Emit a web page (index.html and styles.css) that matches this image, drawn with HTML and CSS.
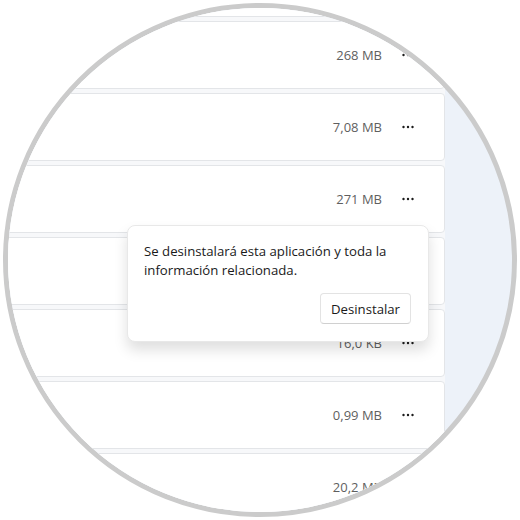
FILE: index.html
```html
<!DOCTYPE html>
<html lang="es">
<head>
  <meta charset="UTF-8" />
  <meta name="viewport" content="width=device-width, initial-scale=1.0"/>
  <title>Aplicaciones instaladas</title>
  <link rel="stylesheet" href="styles.css">
</head>
<body>
  <div class="lens">
    <div class="app-list">
      <div class="app-row"></div>
      <div class="app-row"><span class="size">268 MB</span><span class="more"><svg width="12" height="4" viewBox="0 0 12 4"><circle cx="1.5" cy="2" r="1.2"/><circle cx="6" cy="2" r="1.2"/><circle cx="10.5" cy="2" r="1.2"/></svg></span></div>
      <div class="app-row"><span class="size">7,08 MB</span><span class="more"><svg width="12" height="4" viewBox="0 0 12 4"><circle cx="1.5" cy="2" r="1.2"/><circle cx="6" cy="2" r="1.2"/><circle cx="10.5" cy="2" r="1.2"/></svg></span></div>
      <div class="app-row"><span class="size">271 MB</span><span class="more"><svg width="12" height="4" viewBox="0 0 12 4"><circle cx="1.5" cy="2" r="1.2"/><circle cx="6" cy="2" r="1.2"/><circle cx="10.5" cy="2" r="1.2"/></svg></span></div>
      <div class="app-row"></div>
      <div class="app-row"><span class="size">16,0 KB</span><span class="more"><svg width="12" height="4" viewBox="0 0 12 4"><circle cx="1.5" cy="2" r="1.2"/><circle cx="6" cy="2" r="1.2"/><circle cx="10.5" cy="2" r="1.2"/></svg></span></div>
      <div class="app-row"><span class="size">0,99 MB</span><span class="more"><svg width="12" height="4" viewBox="0 0 12 4"><circle cx="1.5" cy="2" r="1.2"/><circle cx="6" cy="2" r="1.2"/><circle cx="10.5" cy="2" r="1.2"/></svg></span></div>
      <div class="app-row"><span class="size">20,2 MB</span><span class="more"><svg width="12" height="4" viewBox="0 0 12 4"><circle cx="1.5" cy="2" r="1.2"/><circle cx="6" cy="2" r="1.2"/><circle cx="10.5" cy="2" r="1.2"/></svg></span></div>
    </div>

    <div class="flyout">
      <p>Se desinstalará esta aplicación y toda la información relacionada.</p>
      <div class="flyout-actions">
        <button>Desinstalar</button>
      </div>
    </div>
  </div>
</body>
</html>
```

FILE: styles.css
```css
body {
  margin: 0;
  background: #fff;
  font-family: 'Open Sans', 'Noto Sans', sans-serif;
}
.lens {
  position: relative;
  width: 514px;
  height: 514px;
  margin: 3px;
  box-sizing: border-box;
  border: 5px solid #cbcbcb;
  border-radius: 50%;
  overflow: hidden;
  background: #edf2f9;
}
.app-list {
  display: flex;
  flex-direction: column;
  gap: 4px;
  width: 447px;
  margin-top: -59px;
  margin-left: -10px;
  background: #f7f8fa;
}
.app-row {
  display: flex;
  align-items: center;
  justify-content: flex-end;
  height: 68px;
  box-sizing: border-box;
  padding-right: 21px;
  background: #fff;
  border: 1px solid #e3e5e8;
  border-radius: 4px;
  flex-shrink: 0;
}
.size {
  font-size: 13px;
  color: #5f5f5f;
  margin-right: 11px;
}
.more {
  width: 30px;
  display: flex;
  justify-content: center;
  fill: #1b1b1b;
}
.flyout {
  position: absolute;
  left: 119px;
  top: 217px;
  width: 302px;
  box-sizing: border-box;
  padding: 16px 17px 17px 16px;
  background: #fff;
  border: 1px solid #e8e8e8;
  border-radius: 8px;
  box-shadow: 0 8px 14px rgba(0,0,0,0.13);
}
.flyout p {
  margin: 0;
  font-size: 13.2px;
  line-height: 19px;
  color: #1a1a1a;
}
.flyout-actions {
  display: flex;
  justify-content: flex-end;
  margin-top: 13px;
}
.flyout button {
  width: 91px;
  height: 31px;
  font-family: inherit;
  font-size: 13.2px;
  color: #1a1a1a;
  background: #fff;
  border: 1px solid #e3e3e3;
  border-bottom-color: #d0d0d0;
  border-radius: 4px;
}
```
